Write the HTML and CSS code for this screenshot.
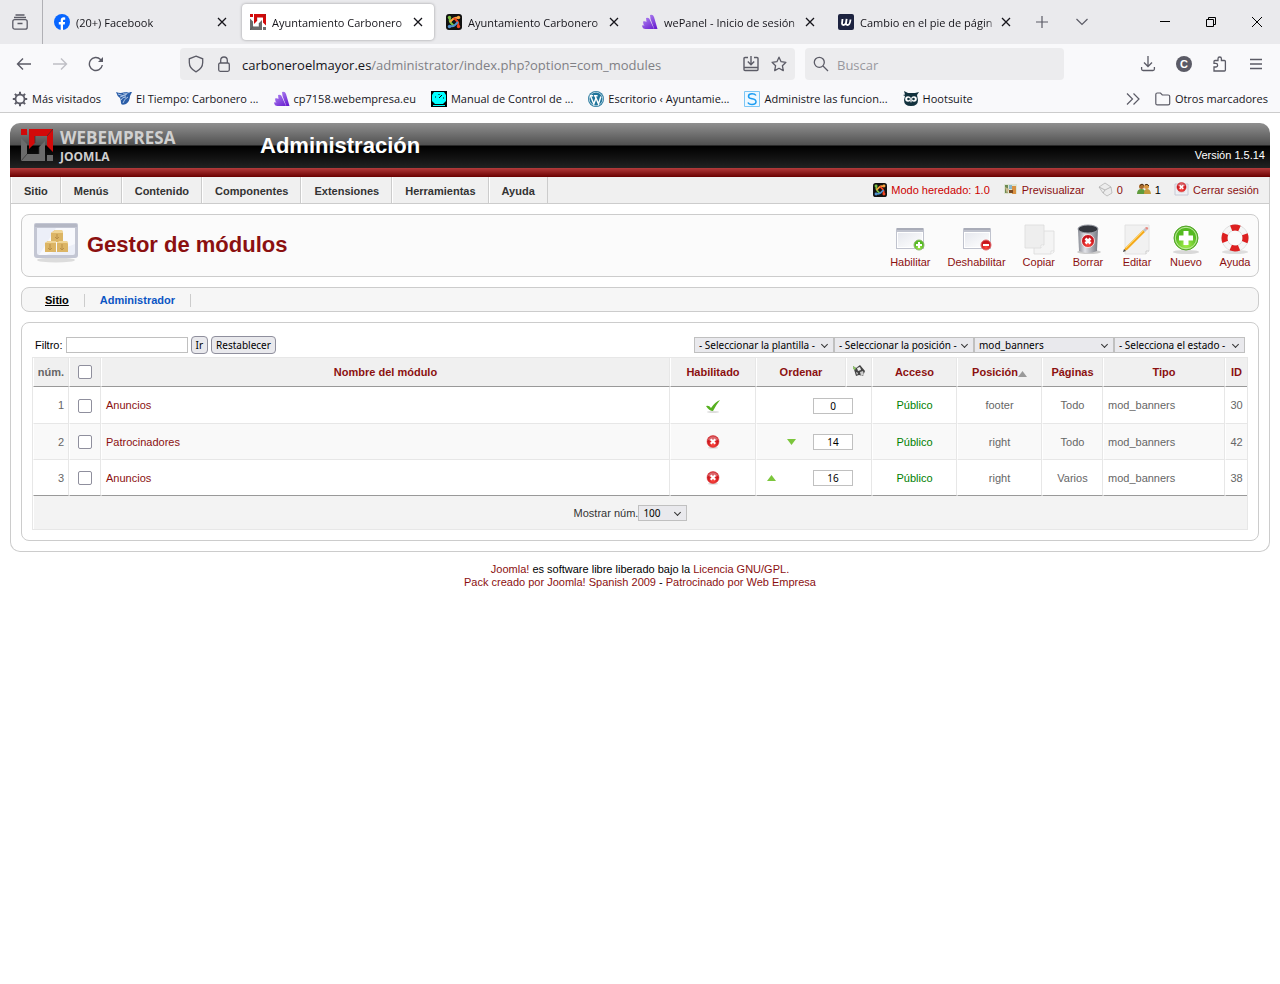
FILE: index.html
```
<!DOCTYPE html>
<html lang="es">
<head>
    <meta charset="utf-8">
    <title>Ayuntamiento Carbonero - Administración</title>
    <link rel="stylesheet" href="styles.css">
</head>
<body>
    <!-- Iconos compartidos -->
    <svg class="sprite" width="0" height="0">
        <defs>
            <linearGradient id="g-win" x1="0" y1="0" x2="1" y2="1"><stop offset="0" stop-color="#e6e8ee"/><stop offset="1" stop-color="#fff"/></linearGradient>
            <linearGradient id="g-purple" gradientUnits="userSpaceOnUse" x1="2" y1="1" x2="12" y2="15"><stop offset="0" stop-color="#b58cf5"/><stop offset="1" stop-color="#6a1fd0"/></linearGradient>
            <linearGradient id="g-metal"><stop offset="0" stop-color="#888b94"/><stop offset=".35" stop-color="#e2e3e8"/><stop offset="1" stop-color="#777a83"/></linearGradient>
            <radialGradient id="g-red" cy=".75"><stop offset="0" stop-color="#ff4a40"/><stop offset="1" stop-color="#c8141c"/></radialGradient>
            <radialGradient id="g-green" cy=".8"><stop offset="0" stop-color="#a5ee4a"/><stop offset="1" stop-color="#55ba22"/></radialGradient>
        </defs>
        <symbol id="close" viewBox="0 0 10 10"><path d="M1 1l8 8M9 1L1 9" stroke="#15141a" stroke-width="1.3" fill="none"/></symbol>
        <symbol id="web" viewBox="0 0 32 32">
            <path fill="#d20a0a" d="M0 0h6v6H0zM8 0h24v23l-6-6V7H14v7l-6 6z"/>
            <path fill="#6b6b6b" d="M24 32H0V9l6 6v10h12v-7l6-6zM26 26h6v6h-6z"/>
            <path stroke="#333" stroke-width=".7" fill="none" d="M26 7l6-7M6 25l-6 7M14 14V7M18 18v7"/>
        </symbol>
        <symbol id="joomla" viewBox="0 0 16 16">
            <rect width="16" height="16" rx="3" fill="#111"/>
            <g fill="none" stroke-width="2">
                <path d="M4 4q-1 3 1 5l3 3" stroke="#7ac143"/>
                <path d="M12 4q-3-1-5 1L4 8" stroke="#f9a541"/>
                <path d="M12 12q1-3-1-5L8 4" stroke="#f44321"/>
                <path d="M4 12q3 1 5-1l3-3" stroke="#5091cd"/>
            </g>
            <circle cx="3.500" cy="3.500" r="1.700" fill="#7ac143"/><circle cx="12.500" cy="3.500" r="1.700" fill="#f9a541"/>
            <circle cx="12.500" cy="12.500" r="1.700" fill="#f44321"/><circle cx="3.500" cy="12.500" r="1.700" fill="#5091cd"/>
        </symbol>
        <symbol id="wepanel" viewBox="0 0 16 16">
            <path fill="url(#g-purple)" d="M8 1q3-1 4 2l3.500 12h-3.300L8.500 5zM4 4q3-1 4 2l4 9H9L4.500 8zM1 7.500q3-1 4.500 1.500L9 15H6L1.500 10.500zM0 11.500q2-.5 3.500.8L6 15H3.500q-3 0-3.500-3.500z"/>
        </symbol>
        <symbol id="ball-x" viewBox="0 0 14 14">
            <ellipse cx="7" cy="12.800" rx="5" ry="1" fill="#ddd"/>
            <circle cx="7" cy="6.500" r="6" fill="url(#g-red)" stroke="#d33" stroke-width=".5"/>
            <path d="M2 5a5.200 5.200 0 0 1 10 0q-5 2-10 0" fill="#fff" opacity=".35"/>
            <path d="M4.700 4.200l4.600 4.600M9.300 4.200L4.700 8.800" stroke="#fff" stroke-width="2"/>
        </symbol>
        <symbol id="window" viewBox="0 0 32 32">
            <path d="M2 5q0-1 1-1h26q1 0 1 1v20H2z" fill="#c0c3ce"/>
            <path d="M3 4h26v2H3z" fill="#a9acb8"/>
            <path d="M3 8h26v16H3z" fill="#fff"/><path d="M4 9h24v14H4z" fill="url(#g-win)"/>
        </symbol>
    </svg>

    <div class="browser">
        <div class="tabbar">
            <button class="overview" aria-label="Ver pestañas">
                <svg width="16" height="16" viewBox="0 0 16 16" fill="none" stroke="#5b5b66" stroke-width="1.300"><path d="M3.500 1h9M2 3.500h12M5.500 9.500h5"/><rect x=".8" y="5.700" width="14.400" height="9.500" rx="2"/></svg>
            </button>
            <div class="tabs">
                <div class="tab">
                    <svg width="16" height="16" viewBox="0 0 16 16"><circle cx="8" cy="8" r="8" fill="#0866ff"/><path fill="#fff" d="M6.700 16v-5.500H4.800V8h1.900V6.800c0-2.600 1.200-3.500 3.100-3.500q.8 0 1.400.2v2.200h-1c-1 0-1.200.5-1.200 1.300v1h2.100l-.4 2.500H9V16z"/></svg>
                    <span class="tab-title">(20+) Facebook</span>
                    <button class="tab-close" aria-label="Cerrar"><svg width="10" height="10"><use href="#close"/></svg></button>
                </div>
                <div class="tab active">
                    <svg width="16" height="16"><use href="#web"/></svg>
                    <span class="tab-title">Ayuntamiento Carbonero</span>
                    <button class="tab-close" aria-label="Cerrar"><svg width="10" height="10"><use href="#close"/></svg></button>
                </div>
                <div class="tab">
                    <svg width="16" height="16"><use href="#joomla"/></svg>
                    <span class="tab-title">Ayuntamiento Carbonero</span>
                    <button class="tab-close" aria-label="Cerrar"><svg width="10" height="10"><use href="#close"/></svg></button>
                </div>
                <div class="tab">
                    <svg width="16" height="16"><use href="#wepanel"/></svg>
                    <span class="tab-title">wePanel - Inicio de sesión</span>
                    <button class="tab-close" aria-label="Cerrar"><svg width="10" height="10"><use href="#close"/></svg></button>
                </div>
                <div class="tab">
                    <svg width="16" height="16" viewBox="0 0 16 16"><rect width="16" height="16" rx="2" fill="#1d2340"/><path d="M4.500 5L4 9.500q0 1.500 1.500 1.500T8 9l.6-4L8 9.500q0 1.500 1.500 1.500 2.500 0 3-5.500" fill="none" stroke="#fff" stroke-width="1.800"/></svg>
                    <span class="tab-title">Cambio en el pie de págin</span>
                    <button class="tab-close" aria-label="Cerrar"><svg width="10" height="10"><use href="#close"/></svg></button>
                </div>
            </div>
            <button class="tab-tool" aria-label="Nueva pestaña"><svg width="14" height="14" viewBox="0 0 14 14"><path d="M7 1v12M1 7h12" stroke="#5b5b66" stroke-width="1.200"/></svg></button>
            <button class="tab-tool" aria-label="Listar pestañas"><svg width="14" height="14" viewBox="0 0 14 14"><path d="M1.500 4L7 9.500 12.500 4" stroke="#5b5b66" stroke-width="1.200" fill="none"/></svg></button>
            <div class="win-controls">
                <button aria-label="Minimizar"><svg width="10" height="10"><path d="M0 4.500h10" stroke="#000"/></svg></button>
                <button aria-label="Restaurar"><svg width="10" height="10" fill="none" stroke="#000"><path d="M.5 2.500h7v7h-7zM2.500 2.500v-2h7v7h-2"/></svg></button>
                <button aria-label="Cerrar"><svg width="10" height="10"><path d="M0 0l10 10M10 0L0 10" stroke="#000"/></svg></button>
            </div>
        </div>

        <div class="navbar">
            <button class="nav-btn" aria-label="Atrás"><svg width="16" height="16" viewBox="0 0 16 16" fill="none" stroke="#5b5b66" stroke-width="1.400"><path d="M15 8H1.500M7 2.500L1.500 8 7 13.500"/></svg></button>
            <button class="nav-btn" aria-label="Adelante"><svg width="16" height="16" viewBox="0 0 16 16" fill="none" stroke="#bfbfc5" stroke-width="1.400"><path d="M1 8h13.500M9 2.500L14.500 8 9 13.500"/></svg></button>
            <button class="nav-btn" aria-label="Recargar"><svg width="16" height="16" viewBox="0 0 16 16" fill="none" stroke="#5b5b66" stroke-width="1.400"><path d="M14.300 9A6.500 6.500 0 1 1 12.500 3.400L14 5"/><path d="M15 1v5h-5z" fill="#5b5b66" stroke="none"/></svg></button>
            <div class="address">
                <svg width="16" height="18" viewBox="0 0 16 18" fill="none" stroke="#5b5b66" stroke-width="1.300"><path d="M8 1.200l6.700 2.600v3.700q0 6-6.700 9.300Q1.300 13.500 1.300 7.500V3.800z"/></svg>
                <svg width="16" height="18" viewBox="0 0 16 18" fill="none" stroke="#5b5b66" stroke-width="1.300"><rect x="2.700" y="8" width="10.600" height="8.300" rx="1.500"/><path d="M4.700 8V5.300a3.300 3.300 0 0 1 6.600 0V8"/></svg>
                <span class="url"><b>carboneroelmayor.es</b>/administrator/index.php?option=com_modules</span>
                <svg width="16" height="16" viewBox="0 0 16 16" fill="none" stroke="#5b5b66" stroke-width="1.400"><path d="M5 1.500H2q-1 0-1 1v11q0 1 1 1h12q1 0 1-1v-11q0-1-1-1h-3M1 11.500h14M8 0v8.500M4.800 5.500L8 8.700l3.200-3.200"/></svg>
                <svg width="16" height="16" viewBox="0 0 16 16" fill="none" stroke="#5b5b66" stroke-width="1.300"><path d="M8 1.200l2.100 4.500 4.800.6-3.500 3.400.9 4.900L8 12.300l-4.300 2.300.9-4.900L1.100 6.300l4.800-.6z" stroke-linejoin="round"/></svg>
            </div>
            <label class="search">
                <svg width="16" height="16" viewBox="0 0 16 16" fill="none" stroke="#5b5b66" stroke-width="1.300"><circle cx="6.300" cy="6.300" r="5"/><path d="M10 10l5 5"/></svg>
                <input type="text" placeholder="Buscar" aria-label="Buscar">
            </label>
            <div class="nav-end">
                <button class="nav-btn" aria-label="Descargas"><svg width="16" height="16" viewBox="0 0 16 16" fill="none" stroke="#5b5b66" stroke-width="1.300"><path d="M8 0v10M4 6.500l4 4 4-4M1.600 11v2q0 1.500 1.500 1.500h9.800q1.500 0 1.500-1.500v-2"/></svg></button>
                <button class="nav-btn account" aria-label="Cuenta"><span>C</span></button>
                <button class="nav-btn" aria-label="Extensiones"><svg width="16" height="16" viewBox="0 0 16 16" fill="none" stroke="#5b5b66" stroke-width="1.300"><path d="M2 15V11h1.800a1.800 1.800 0 0 0 0-3.600H2V5.500q0-1 1-1h3V2.700a1.700 1.700 0 0 1 3.400 0v1.800h3q1 0 1 1V14q0 1-1 1z"/></svg></button>
                <button class="nav-btn" aria-label="Menú"><svg width="16" height="16" viewBox="0 0 16 16" stroke="#5b5b66" stroke-width="1.300"><path d="M2 3.500h12M2 8h12M2 12.500h12"/></svg></button>
            </div>
        </div>

        <div class="bookmarks">
            <a href="#"><svg width="16" height="16" viewBox="0 0 16 16" fill="none" stroke="#5b5b66"><circle cx="8" cy="8" r="4.500" stroke-width="1.800"/><path d="M8 .8V3M8 13v2.200M.8 8H3M13 8h2.200M2.900 2.900l1.600 1.600M11.500 11.500l1.600 1.600M13.100 2.900l-1.600 1.600M4.500 11.500l-1.600 1.600" stroke-width="2"/></svg>Más visitados</a>
            <a href="#"><svg width="16" height="16" viewBox="0 0 16 16"><path d="M0 1q5 2 8 0h8l-2 4q0 5-4 8-5 2-5-1 0-3-1-5-3-2-4-6z" fill="#2b5ea8"/><path d="M2 3q5 3 9 0M4 6q4-2 6-1M5 9q1-3 5-3M7 12q1-4 5-6M7 2q4 1 7-1" stroke="#cfe0f5" stroke-width=".8" fill="none"/></svg>El Tiempo: Carbonero ...</a>
            <a href="#"><svg width="16" height="16"><use href="#wepanel"/></svg>cp7158.webempresa.eu</a>
            <a href="#"><svg width="16" height="16" viewBox="0 0 16 16"><path d="M0 0h16v16H0z"/><path d="M3 1h10l2 3v6l-3 3H4L1 10V4z" fill="#0ff"/><path d="M2 14.500h12" stroke="#0ff"/><path d="M8 7l3-3M8 3v1M4 6h1M12 7h1" stroke="#000"/></svg>Manual de Control de ...</a>
            <a href="#"><svg width="16" height="16" viewBox="0 0 16 16"><circle cx="8" cy="8" r="8" fill="#21759b"/><circle cx="8" cy="8" r="6.800" fill="none" stroke="#e8f2f7" stroke-width=".7"/><path d="M2.500 5l3.300 8L8 7l2.500 6 2.400-7.500M1.800 4.800h3.400M6 4.800h3.600M7 4.800L8 7.500" fill="none" stroke="#fff" stroke-width="1.400"/></svg>Escritorio ‹ Ayuntamie...</a>
            <a href="#"><svg width="16" height="16" viewBox="0 0 16 16"><path d="M.5.500h15v15H.5z" fill="#eef8ff" stroke="#7cc6f5"/><path d="M12 4.500Q11 2.700 8 2.700q-3.500 0-3.500 2.500 0 2 3.500 2.600 4 .7 4 3 0 2.700-4 2.700-3.200 0-4-2" fill="none" stroke="#1b9cf2" stroke-width="1.500"/></svg>Administre las funcion...</a>
            <a href="#"><svg width="16" height="16" viewBox="0 0 16 16"><path d="M1 0l4 2h7l4-1-2 3 1 5q0 6-7 6t-7-6l1-4-2-1 2-.5z" fill="#12313d"/><circle cx="5" cy="8" r="2.800" fill="#fff"/><circle cx="11" cy="8" r="2.800" fill="#fff"/><circle cx="5.500" cy="8" r="1.300" fill="#12313d"/><circle cx="10.500" cy="8" r="1.300" fill="#12313d"/><path d="M7 9.500h2L8 12z" fill="#fff"/></svg>Hootsuite</a>
            <button class="more" aria-label="Más marcadores"><svg width="14" height="12" viewBox="0 0 14 12" fill="none" stroke="#5b5b66" stroke-width="1.200"><path d="M1 .5L6.500 6 1 11.500M7.500.5L13 6l-5.500 5.500"/></svg></button>
            <a href="#"><svg width="16" height="16" viewBox="0 0 16 16" fill="none" stroke="#5b5b66" stroke-width="1.200"><path d="M.8 12.500V3.500q0-1.500 1.500-1.500h3.200l1.800 2h5.900q1.500 0 1.500 1.500v7q0 1.300-1.500 1.300H2.300q-1.500 0-1.500-1.300z"/></svg>Otros marcadores</a>
        </div>
    </div>

    <div class="page">
        <header class="header">
            <div class="brand">
                <svg width="32" height="32"><use href="#web"/></svg>
                <div class="brand-text"><span>WEBEMPRESA</span><small>JOOMLA</small></div>
            </div>
            <h1>Administración</h1>
            <span class="version">Versión 1.5.14</span>
        </header>

        <div class="frame">
            <div class="menubar">
                <nav class="menu">
                    <a href="#">Sitio</a>
                    <a href="#">Menús</a>
                    <a href="#">Contenido</a>
                    <a href="#">Componentes</a>
                    <a href="#">Extensiones</a>
                    <a href="#">Herramientas</a>
                    <a href="#">Ayuda</a>
                </nav>
                <div class="status">
                    <a href="#" class="legacy"><svg width="16" height="14"><use href="#joomla"/></svg>Modo heredado: 1.0</a>
                    <a href="#"><svg width="16" height="16" viewBox="0 0 16 16"><path d="M1 2h13v10H1z" fill="#dfe6d5"/><path d="M2 3h3v8H2z" fill="#6d8a53"/><path d="M6 3h3v4H6z" fill="#8bb7c9"/><path d="M9 4h4v8H9z" fill="#d89142"/><path d="M6 8h4v3H6z" fill="#7a4a22"/><path d="M2 5l4 2-2 5z" fill="#c9b98e"/></svg>Previsualizar</a>
                    <a href="#"><svg width="16" height="16" viewBox="0 0 16 16"><path d="M1 5l6-4 6 4 1 6-5 3-4-3z" fill="#ececec" stroke="#b5b5b5" stroke-width=".8"/><path d="M1 5l6 3 6-3M7 8l-2 3" stroke="#aaa" stroke-width=".8" fill="none"/></svg>0</a>
                    <span><svg width="16" height="16" viewBox="0 0 16 16"><circle cx="5.500" cy="4.500" r="2.500" fill="#a86a2c"/><circle cx="10.500" cy="4.500" r="2.500" fill="#d9963d"/><path d="M1 12q0-5 4.500-5 4 0 4 5z" fill="#5f9b3b"/><path d="M8 12q0-5 3-5 3.500 0 4 5z" fill="#c59a3e"/><path d="M4 3.500q2-3 4 0M9 3q2-2 4 1" stroke="#4a2c10" fill="none"/></svg>1</span>
                    <a href="#"><svg width="16" height="16" viewBox="0 0 16 16"><path d="M1 2h13v11H1z" fill="#eef0f5" stroke="#c8cad4"/><svg x="2" y="0" width="11" height="11"><use href="#ball-x"/></svg></svg>Cerrar sesión</a>
                </div>
            </div>

            <main class="content">
                <section class="box toolbar">
                    <div class="title">
                        <svg width="48" height="48" viewBox="0 0 48 48">
                            <ellipse cx="24" cy="39" rx="19" ry="2.500" fill="#dcdcdc"/>
                            <path d="M2 4q0-2 2-2h40q2 0 2 2v30q0 3-3 3H5q-3 0-3-3z" fill="#c3c6d3"/>
                            <path d="M3 6h42v-2q0-1-1-1H4q-1 0-1 1z" fill="#b4b7c4"/>
                            <path d="M5 7h38v25q0 2-2 2H7q-2 0-2-2z" fill="#eceff8"/><path d="M24 7h19v16L14 34H7z" fill="#f8f9fd"/>
                            <path d="M19 12l4-3h7l1 3v9H19zM13 22l3-2h8v11H13zM25 22l2-2h8l1 3v8H25z" fill="#dcb565"/>
                            <path d="M19 12l4-3h7l1 3zM13 22l3-2h8v2zM25 22l2-2h8l1 2z" fill="#f0d596"/>
                            <path d="M25 13v5M23 16l2 2 2-2M18 23v6M16 27l2 2 2-2M30 23v6M28 27l2 2 2-2" stroke="#b98f48" fill="none"/>
                        </svg>
                        <h2>Gestor de módulos</h2>
                    </div>
                    <div class="actions">
                        <a href="#"><svg width="32" height="32" viewBox="0 0 32 32"><use href="#window"/><circle cx="25" cy="21" r="5" fill="url(#g-green)" stroke="#8ab86b"/><path d="M25 18v6M22 21h6" stroke="#fff" stroke-width="2"/></svg>Habilitar</a>
                        <a href="#"><svg width="32" height="32" viewBox="0 0 32 32"><use href="#window"/><circle cx="25" cy="21" r="5" fill="url(#g-red)" stroke="#e0686c"/><path d="M22 21h6" stroke="#fff" stroke-width="2"/></svg>Deshabilitar</a>
                        <a href="#"><svg width="32" height="32" viewBox="0 0 32 32" stroke="#dcdcdc" stroke-width=".8"><path d="M11 7h20v21l-3 2H11z" fill="#f4f4f4"/><path d="M2 1h19v20l-3 3H2z" fill="#eee"/><path d="M28 30v-3h3M18 24v-3h3" fill="#fff"/></svg>Copiar</a>
                        <a href="#"><svg width="32" height="32" viewBox="0 0 32 32"><ellipse cx="17" cy="28" rx="12" ry="2" fill="#ccc"/><path d="M6 5h20l-1 22q-9 4-18 0z" fill="url(#g-metal)"/><ellipse cx="16" cy="5" rx="10" ry="4" fill="#33363d" stroke="#999ca5"/><circle cx="16" cy="17" r="6.500" fill="url(#g-red)" stroke="#fff" stroke-width=".8"/><path d="M13.500 14.500l5 5M18.500 14.500l-5 5" stroke="#fff" stroke-width="2.500"/></svg>Borrar</a>
                        <a href="#"><svg width="32" height="32" viewBox="0 0 32 32"><path d="M4 1h24v26l-3 3H4z" fill="#f1f1f1" stroke="#e2e2e2"/><path d="M25 30v-3h3" fill="#fff" stroke="#ccc"/><path d="M4 24L22 6l2 2L6 26l-3 1z" fill="#f5a91b"/><path d="M5 24L22.500 6.500" stroke="#fbd568"/><path d="M22 6l2-2 2 2-2 2z" fill="#bfc2c8"/><path d="M24 4l1-1q3 0 2 2l-1 1z" fill="#e88a82"/><path d="M2 28l1-3 2 2z" fill="#444"/></svg>Editar</a>
                        <a href="#"><svg width="32" height="32" viewBox="0 0 32 32"><ellipse cx="16" cy="28" rx="13" ry="2" fill="#d8d8d8"/><circle cx="16" cy="14" r="12" fill="url(#g-green)" stroke="#55a52b"/><circle cx="16" cy="14" r="10.700" fill="none" stroke="#c4eba5"/><path d="M16 7v14M9 14h14" stroke="#fff" stroke-width="5"/></svg>Nuevo</a>
                        <a href="#"><svg width="32" height="32" viewBox="0 0 32 32" fill="none"><ellipse cx="16" cy="28" rx="13" ry="2" fill="#ddd"/><circle cx="16" cy="14" r="10.500" stroke="#d0d0d0" stroke-width="6"/><circle cx="16" cy="14" r="10.500" stroke="#f6f6f6" stroke-width="5"/><circle cx="16" cy="14" r="10.500" stroke="#dd2020" stroke-width="6" stroke-dasharray="8.500 8" stroke-dashoffset="4.250"/></svg>Ayuda</a>
                    </div>
                </section>

                <nav class="box submenu">
                    <a href="#" class="current">Sitio</a>
                    <a href="#">Administrador</a>
                </nav>

                <section class="box list">
                    <form class="filters">
                        <label for="filtro">Filtro:</label>
                        <input type="text" id="filtro" class="filter-text">
                        <button type="button">Ir</button>
                        <button type="button">Restablecer</button>
                        <div class="selects">
                            <span class="select"><select aria-label="Plantilla"><option>- Seleccionar la plantilla -</option></select></span>
                            <span class="select"><select aria-label="Posición"><option>- Seleccionar la posición -</option></select></span>
                            <span class="select"><select aria-label="Tipo"><option>mod_banners</option></select></span>
                            <span class="select"><select aria-label="Estado" class="state"><option>- Selecciona el estado -</option></select></span>
                        </div>
                    </form>

                    <table class="modules">
                        <colgroup>
                            <col class="c-num"><col class="c-check"><col><col class="c-enabled"><col class="c-order"><col class="c-save">
                            <col class="c-access"><col class="c-access"><col class="c-pages"><col class="c-type"><col class="c-id">
                        </colgroup>
                        <thead>
                            <tr>
                                <th>núm.</th>
                                <th><input type="checkbox" aria-label="Marcar todos"></th>
                                <th><a href="#">Nombre del módulo</a></th>
                                <th><a href="#">Habilitado</a></th>
                                <th><a href="#">Ordenar</a></th>
                                <th><a href="#" aria-label="Guardar orden"><svg width="14" height="14" viewBox="0 0 14 14"><path d="M1 2l3 2 4-3 5 6-2 5-4-1-3 1z" fill="#444"/><path d="M1 2l3 2-1 2-2-1z" fill="#8fc46a"/><path d="M5 4l3-1 1 3-3 1z" fill="#eee"/><path d="M8 8l3-1 1 4-3 1z" fill="#ccc"/><path d="M4 8l2 1-1 2z" fill="#ddd"/></svg></a></th>
                                <th><a href="#">Acceso</a></th>
                                <th><a href="#">Posición<svg width="9" height="6" viewBox="0 0 9 6"><path d="M0 6l4.500-6L9 6z" fill="#999"/></svg></a></th>
                                <th><a href="#">Páginas</a></th>
                                <th><a href="#">Tipo</a></th>
                                <th><a href="#">ID</a></th>
                            </tr>
                        </thead>
                        <tbody>
                            <tr>
                                <td class="num">1</td>
                                <td class="mid"><input type="checkbox" aria-label="Fila 1"></td>
                                <td><a href="#">Anuncios</a></td>
                                <td class="mid"><svg width="16" height="16" viewBox="0 0 16 16"><ellipse cx="8" cy="14" rx="6" ry="1" fill="#ddd"/><path d="M1 8q3-1 5 2 4-6 9-8-4 5-7 11-4 0-7-5z" fill="#56b01f"/></svg></td>
                                <td colspan="2"><div class="order"><span></span><span></span><input type="text" value="0" aria-label="Orden"></div></td>
                                <td class="mid public"><a href="#">Público</a></td>
                                <td class="mid">footer</td>
                                <td class="mid">Todo</td>
                                <td>mod_banners</td>
                                <td class="mid">30</td>
                            </tr>
                            <tr>
                                <td class="num">2</td>
                                <td class="mid"><input type="checkbox" aria-label="Fila 2"></td>
                                <td><a href="#">Patrocinadores</a></td>
                                <td class="mid"><svg width="14" height="14"><use href="#ball-x"/></svg></td>
                                <td colspan="2"><div class="order"><span></span><span><svg width="9" height="6" viewBox="0 0 9 6"><path d="M0 0h9L4.500 6z" fill="#7cc63c"/></svg></span><input type="text" value="14" aria-label="Orden"></div></td>
                                <td class="mid public"><a href="#">Público</a></td>
                                <td class="mid">right</td>
                                <td class="mid">Todo</td>
                                <td>mod_banners</td>
                                <td class="mid">42</td>
                            </tr>
                            <tr>
                                <td class="num">3</td>
                                <td class="mid"><input type="checkbox" aria-label="Fila 3"></td>
                                <td><a href="#">Anuncios</a></td>
                                <td class="mid"><svg width="14" height="14"><use href="#ball-x"/></svg></td>
                                <td colspan="2"><div class="order"><span><svg width="9" height="6" viewBox="0 0 9 6"><path d="M0 6h9L4.500 0z" fill="#7cc63c"/></svg></span><span></span><input type="text" value="16" aria-label="Orden"></div></td>
                                <td class="mid public"><a href="#">Público</a></td>
                                <td class="mid">right</td>
                                <td class="mid">Varios</td>
                                <td>mod_banners</td>
                                <td class="mid">38</td>
                            </tr>
                        </tbody>
                        <tfoot>
                            <tr>
                                <td colspan="11"><div class="pager"><label for="limite">Mostrar núm.</label><span class="select"><select id="limite"><option>100</option></select></span></div></td>
                            </tr>
                        </tfoot>
                    </table>
                </section>
            </main>
        </div>

        <footer class="footer">
            <p><a href="#">Joomla!</a> es software libre liberado bajo la <a href="#">Licencia GNU/GPL.</a></p>
            <p><a href="#">Pack creado por Joomla! Spanish 2009</a> - <a href="#">Patrocinado por Web Empresa</a></p>
        </footer>
    </div>
</body>
</html>
```
FILE: styles.css
```
* {
    box-sizing: border-box;
}
body {
    margin: 0;
    background: #fff;
    font-family: "Liberation Sans", Arial, sans-serif;
    font-size: 11px;
    line-height: 13px;
    color: #000;
}
a {
    color: #8b1010;
    text-decoration: none;
}
svg {
    flex: none;
}
h1, h2, p {
    margin: 0;
}
.sprite {
    position: absolute;
}

/* Navegador */
.browser {
    background: #f9f9fb;
    border-bottom: 1px solid #ccc;
    font-family: "Open Sans", "Noto Sans", sans-serif;
    line-height: 16px;
    color: #15141a;
}
.browser button {
    display: flex;
    align-items: center;
    justify-content: center;
    padding: 0;
    border: 0;
    background: none;
}
.tabbar {
    display: flex;
    height: 44px;
    background: #eaeaed;
}
.browser .overview {
    width: 43px;
    padding-right: 2px;
    border-right: 1px solid #b0b0b5;
}
.tabs {
    display: flex;
    gap: 4px;
    padding: 4px 0 4px 3px;
}
.tab {
    display: flex;
    align-items: center;
    width: 192px;
    padding: 0 11px 0 8px;
    border-radius: 4px;
}
.tab.active {
    background: #fff;
    box-shadow: 0 0 3px rgba(0, 0, 0, .35);
}
.tab-title {
    flex: 1;
    margin-left: 6px;
    padding-top: 1px;
    font-size: 11px;
    white-space: nowrap;
    -webkit-mask-image: linear-gradient(to left, transparent, #000 10px);
    mask-image: linear-gradient(to left, transparent, #000 10px);
}
.tab-close {
    margin-left: 4px;
}
.tab-tool {
    width: 40px;
}
.win-controls {
    display: flex;
    margin-left: auto;
}
.win-controls button {
    width: 46px;
}
.navbar {
    display: flex;
    align-items: center;
    height: 40px;
    padding: 0 6px;
}
.nav-btn {
    width: 36px;
    height: 32px;
}
.address, .search {
    display: flex;
    align-items: center;
    gap: 12px;
    height: 32px;
    padding: 0 8px;
    border-radius: 4px;
    background: #ececee;
    font-size: 13px;
}
.address {
    flex: 1;
    margin-left: 66px;
}
.url {
    flex: 1;
    margin-left: -2px;
    padding-top: 1px;
    color: #808085;
    white-space: nowrap;
}
.url b {
    font-weight: normal;
    color: #15141a;
}
.search {
    gap: 8px;
    width: 259px;
    margin: 0 66px 0 10px;
}
.search input {
    width: 100%;
    padding: 1px 0 0;
    border: 0;
    background: none;
    font: inherit;
}
.search input::placeholder {
    color: #98989e;
}
.nav-end {
    display: flex;
}
.account span {
    width: 16px;
    height: 16px;
    border-radius: 8px;
    background: #5b5b66;
    color: #fff;
    font-size: 11px;
    line-height: 16px;
    font-weight: bold;
}
.bookmarks {
    display: flex;
    align-items: center;
    gap: 15px;
    height: 28px;
    padding: 1px 12px 0;
}
.bookmarks a {
    display: flex;
    align-items: center;
    gap: 4px;
    color: #15141a;
    white-space: nowrap;
}
.browser .more {
    margin-left: auto;
}

/* Cabecera */
.page {
    padding: 10px;
}
.header {
    display: flex;
    height: 54px;
    border-radius: 10px 10px 0 0;
    background:
        linear-gradient(#b43c3c, #6a0000) 0 100% / 100% 9px no-repeat,
        linear-gradient(#909090, #505050 22px, #000 23px, #222 45px);
    color: #fff;
}
.brand {
    display: flex;
    gap: 7px;
    width: 250px;
    padding: 6px 0 0 11px;
}
.brand-text {
    display: flex;
    flex-direction: column;
    font-family: "Open Sans", sans-serif;
    font-weight: bold;
    font-size: 17px;
    line-height: 17px;
    color: #d0d0d0;
}
.brand-text small {
    margin-top: 4px;
    font-size: 12px;
    line-height: 14px;
}
.header h1 {
    font-size: 22px;
    line-height: 45px;
}
.version {
    margin: 26px 5px 0 auto;
}
.frame {
    border: 1px solid #ccc;
    border-top: 0;
    border-radius: 0 0 10px 10px;
}
.menubar {
    display: flex;
    justify-content: space-between;
    height: 27px;
    border-bottom: 1px solid #ccc;
    background: #f0f0f0;
}
.menu {
    display: flex;
}
.menu a {
    padding: 0 12px;
    border-left: 1px solid #fff;
    border-right: 1px solid #ccc;
    font-weight: bold;
    line-height: 28px;
    color: #333;
}
.status {
    display: flex;
    align-items: center;
    gap: 13px;
    padding-right: 10px;
}
.status > * {
    display: flex;
    align-items: center;
    gap: 3px;
}
.status .legacy {
    color: #c00;
}
.content {
    display: flex;
    flex-direction: column;
    gap: 10px;
    padding: 10px;
}
.box {
    border: 1px solid #ccc;
    border-radius: 8px;
}

/* Barra de herramientas */
.toolbar {
    display: flex;
    justify-content: space-between;
    height: 63px;
    background: #fbfbfb;
}
.title {
    display: flex;
    gap: 7px;
    padding: 6px 0 0 10px;
}
.title h2 {
    font-size: 22px;
    line-height: 48px;
    color: #8b1010;
}
.actions {
    display: flex;
    gap: 17px;
    padding: 9px 7px 0 0;
}
.actions a {
    display: flex;
    flex-direction: column;
    align-items: center;
    min-width: 32px;
}
.submenu {
    display: flex;
    align-items: center;
    height: 25px;
    padding: 1px 0 0 8px;
    background: #f6f6f6;
}
.submenu a {
    padding: 0 15px;
    border-right: 1px solid #ccc;
    font-weight: bold;
    color: #0b55c4;
}
.submenu .current {
    color: #000;
    text-decoration: underline;
}

/* Listado */
.list {
    padding: 13px 10px 10px;
}
.filters {
    display: flex;
    align-items: center;
    gap: 3px;
    height: 18px;
    margin-bottom: 3px;
    padding: 0 3px;
}
.list input, .list select, .filters button {
    font-family: "Noto Sans", "Open Sans", sans-serif;
    font-size: 10px;
    line-height: 14px;
}
.list input[type="text"] {
    height: 16px;
    padding: 0 2px;
    border: 1px solid silver;
    background: #fff;
}
.filters .filter-text {
    width: 122px;
}
.filters button {
    height: 18px;
    padding: 0 4px;
    border: 1px solid #8f8f9d;
    border-radius: 4px;
    background: #e9e9ed;
    color: #000;
}
.selects {
    display: flex;
    margin-left: auto;
}
.select {
    position: relative;
    display: flex;
}
.select::after {
    content: "";
    position: absolute;
    top: 5px;
    right: 7px;
    width: 4px;
    height: 4px;
    border: solid #333;
    border-width: 0 1px 1px 0;
    transform: rotate(45deg);
    pointer-events: none;
}
select {
    -webkit-appearance: none;
    appearance: none;
    width: 140px;
    height: 16px;
    padding: 0 4px;
    border: 1px solid silver;
    border-radius: 0;
    background: #e9e9ed;
    color: #000;
}
select.state {
    width: 131px;
}
.modules {
    width: 100%;
    table-layout: fixed;
    border: 1px solid #e7e7e7;
    border-spacing: 0;
    color: #666;
}
.c-num { width: 36px; }
.c-check { width: 32px; }
.c-enabled { width: 86px; }
.c-order { width: 90px; }
.c-save { width: 26px; }
.c-access { width: 85px; }
.c-pages { width: 61px; }
.c-type { width: 122px; }
.c-id { width: 22px; }
.modules th, .modules td {
    padding: 1px 4px 0;
    border-left: 1px solid #fff;
    border-right: 1px solid #e7e7e7;
    text-align: left;
}
.modules th:last-child, .modules td:last-child {
    padding: 1px 0 0;
    border-right: 0;
}
.modules th {
    height: 29px;
    padding: 0;
    border-bottom: 1px solid #999;
    background: #f0f0f0;
    text-align: center;
}
.modules tbody td {
    height: 36px;
    border-bottom: 1px solid #e7e7e7;
}
.modules tbody tr:first-child td {
    height: 37px;
}
.modules tbody tr:nth-child(even) td {
    background: #f9f9f9;
}
.modules tbody tr:last-child td {
    border-bottom-color: #999;
}
.modules td.mid {
    padding: 1px 0 0;
    text-align: center;
}
.modules td.num {
    text-align: right;
}
.modules .public a {
    color: #008000;
}
.modules td svg {
    vertical-align: middle;
}
.modules th svg {
    vertical-align: -1px;
}
.modules input[type="checkbox"] {
    -webkit-appearance: none;
    appearance: none;
    display: block;
    width: 14px;
    height: 14px;
    margin: 0 auto;
    border: 1px solid #8f8f9d;
    border-radius: 2px;
    background: #fff;
}
.order {
    display: flex;
    align-items: center;
    justify-content: flex-end;
    padding-right: 14px;
}
.order span {
    display: flex;
    justify-content: center;
    width: 20px;
}
.list .order input {
    width: 40px;
    margin-left: 12px;
    text-align: center;
}
.modules tfoot td {
    height: 33px;
    background: #f3f3f3;
    color: #333;
}
.pager {
    display: flex;
    align-items: center;
    justify-content: center;
    padding-right: 20px;
}
.pager select {
    width: 49px;
}

.footer {
    margin-top: 11px;
    text-align: center;
}
```
